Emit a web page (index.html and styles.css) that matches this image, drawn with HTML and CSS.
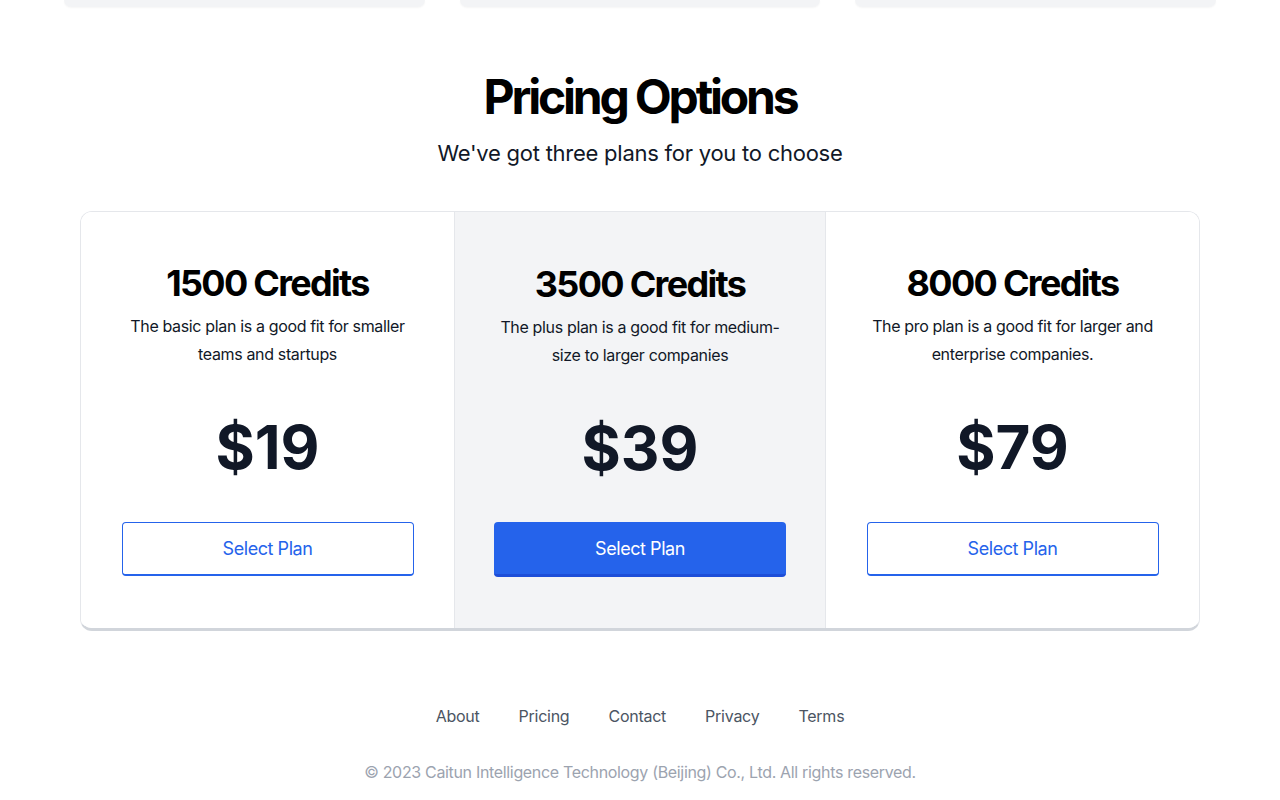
FILE: index.html
```html
<!DOCTYPE html>
<html lang="en">
<head>
<meta charset="utf-8">
<title>Pricing Options</title>
<link rel="stylesheet" href="styles.css">
</head>
<body>
<div class="top-strip">
  <div class="top-card"></div>
  <div class="top-card"></div>
  <div class="top-card"></div>
</div>

<section class="pricing">
  <h1 class="pricing-title">Pricing Options</h1>
  <p class="pricing-sub">We've got three plans for you to choose</p>

  <div class="plans">
    <div class="plan">
      <h2 class="plan-name">1500 Credits</h2>
      <p class="plan-desc">The basic plan is a good fit for smaller teams and startups</p>
      <div class="plan-price">$19</div>
      <button class="btn btn-outline">Select Plan</button>
    </div>
    <div class="plan plan-featured">
      <h2 class="plan-name">3500 Credits</h2>
      <p class="plan-desc">The plus plan is a good fit for medium-size to larger companies</p>
      <div class="plan-price">$39</div>
      <button class="btn btn-solid">Select Plan</button>
    </div>
    <div class="plan">
      <h2 class="plan-name">8000 Credits</h2>
      <p class="plan-desc">The pro plan is a good fit for larger and enterprise companies.</p>
      <div class="plan-price">$79</div>
      <button class="btn btn-outline">Select Plan</button>
    </div>
  </div>
</section>

<footer class="footer">
  <nav class="footer-links">
    <a href="#">About</a>
    <a href="#">Pricing</a>
    <a href="#">Contact</a>
    <a href="#">Privacy</a>
    <a href="#">Terms</a>
  </nav>
  <p class="copyright">© 2023 Caitun Intelligence Technology (Beijing) Co., Ltd. All rights reserved.</p>
</footer>
</body>
</html>
```

FILE: styles.css
```css
* { box-sizing: border-box; }

body {
  margin: 0;
  background: #ffffff;
  font-family: Inter, "Noto Sans", "Liberation Sans", sans-serif;
  color: #111827;
}

.top-strip {
  display: flex;
  gap: 35px;
  max-width: 1152px;
  margin: 0 auto;
}

.top-card {
  flex: 1;
  height: 7px;
  background: #f3f4f6;
  border-radius: 0 0 10px 10px;
  box-shadow: 0 1px 2px rgba(0, 0, 0, 0.04);
}

.pricing {
  padding-top: 66px;
  text-align: center;
}

.pricing-title {
  margin: 0;
  font-size: 48px;
  line-height: 48px;
  font-weight: 700;
  letter-spacing: -3.2px;
  color: #000000;
}

.pricing-sub {
  margin: 17px 0 0;
  font-size: 22px;
  line-height: 30px;
  letter-spacing: -0.25px;
  color: #111827;
}

.plans {
  display: grid;
  grid-template-columns: 373px 372px 373px;
  width: 1120px;
  margin: 43px auto 0;
  border: 1px solid #e5e7eb;
  border-bottom: 3px solid #d1d5db;
  border-radius: 12px;
  overflow: hidden;
}

.plan {
  display: flex;
  flex-direction: column;
  align-items: center;
  padding: 51px 20px 51px;
  background: #ffffff;
}

.plan-featured {
  background: #f3f4f6;
  border-left: 1px solid #e5e7eb;
  border-right: 1px solid #e5e7eb;
  padding-top: 52px;
}

.plan-name {
  margin: 0;
  font-size: 36px;
  line-height: 40px;
  font-weight: 700;
  letter-spacing: -1.7px;
  color: #000000;
}

.plan-desc {
  margin: 9px 0 0;
  max-width: 285px;
  font-size: 16px;
  line-height: 28px;
  letter-spacing: -0.35px;
  color: #111827;
}

.plan-price {
  margin-top: 49px;
  font-size: 60px;
  line-height: 60px;
  font-weight: 700;
  color: #111827;
}

.btn {
  margin-top: 45px;
  width: 292px;
  height: 54px;
  font-family: inherit;
  font-size: 18px;
  letter-spacing: -0.45px;
  border-radius: 4px;
  cursor: pointer;
}

.btn-outline {
  background: #ffffff;
  color: #2563eb;
  border: 1px solid #2563eb;
  border-bottom-width: 2px;
}

.btn-solid {
  margin-top: 44px;
  height: 55px;
  background: #2563eb;
  color: #ffffff;
  border: none;
  border-bottom: 3px solid #1d4ed8;
}

.footer {
  padding-top: 73px;
  text-align: center;
}

.footer-links {
  display: flex;
  justify-content: center;
  gap: 39px;
}

.footer-links a {
  font-size: 16px;
  line-height: 24px;
  letter-spacing: -0.25px;
  color: #4b5563;
  text-decoration: none;
}

.copyright {
  margin: 32px 0 0;
  font-size: 16px;
  line-height: 24px;
  letter-spacing: -0.33px;
  color: #9ca3af;
}
```
